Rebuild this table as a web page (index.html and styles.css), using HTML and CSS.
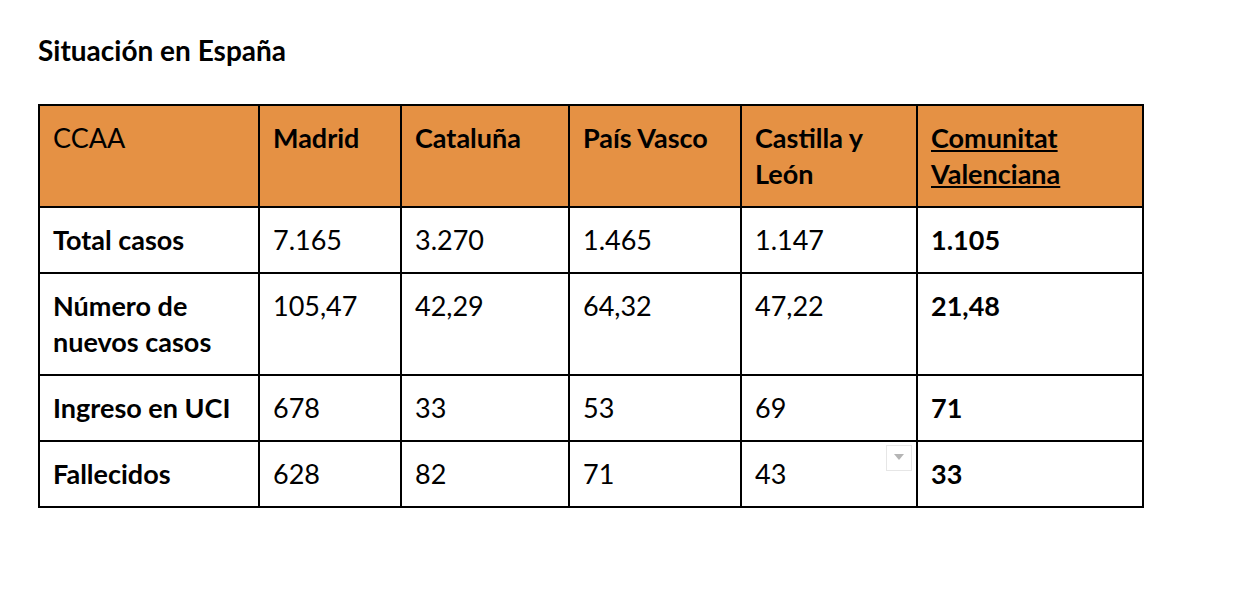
FILE: index.html
```html
<!DOCTYPE html>
<html lang="es">
<head>
<meta charset="utf-8">
<title>Situación en España</title>
<link rel="stylesheet" href="styles.css">
</head>
<body>
<main class="page">
  <h1 class="title">Situación en España</h1>
  <table class="data">
    <colgroup>
      <col class="c1"><col class="c2"><col class="c3"><col class="c4"><col class="c5"><col class="c6">
    </colgroup>
    <thead>
      <tr>
        <th class="plain">CCAA</th>
        <th>Madrid</th>
        <th>Cataluña</th>
        <th>País Vasco</th>
        <th>Castilla y León</th>
        <th><u>Comunitat Valenciana</u></th>
      </tr>
    </thead>
    <tbody>
      <tr>
        <th>Total casos</th>
        <td>7.165</td><td>3.270</td><td>1.465</td><td>1.147</td><td class="b">1.105</td>
      </tr>
      <tr>
        <th>Número de nuevos casos</th>
        <td>105,47</td><td>42,29</td><td>64,32</td><td>47,22</td><td class="b">21,48</td>
      </tr>
      <tr>
        <th>Ingreso en UCI</th>
        <td>678</td><td>33</td><td>53</td><td>69</td><td class="b">71</td>
      </tr>
      <tr>
        <th>Fallecidos</th>
        <td>628</td><td>82</td><td>71</td><td class="has-menu">43<span class="menu-btn" aria-hidden="true"></span></td><td class="b">33</td>
      </tr>
    </tbody>
  </table>
</main>
</body>
</html>
```
FILE: styles.css
```css
html, body {
  margin: 0;
  padding: 0;
  background: #ffffff;
}

body {
  font-family: Lato, "Open Sans", sans-serif;
  color: #000000;
}

.page {
  padding: 32px 0 0 38px;
}

.title {
  margin: 0 0 36px 0;
  font-size: 28px;
  line-height: 36px;
  font-weight: 700;
}

.data {
  border-collapse: collapse;
  table-layout: fixed;
  width: 1105px;
  font-size: 27px;
  line-height: 36px;
}

.c1 { width: 220px; }
.c2 { width: 142px; }
.c3 { width: 168px; }
.c4 { width: 172px; }
.c5 { width: 176px; }
.c6 { width: 226px; }

.data th,
.data td {
  border: 2px solid #000000;
  padding: 14px 13px 14px 13px;
  text-align: left;
  vertical-align: top;
}

.data th {
  font-weight: 700;
}

.data thead th {
  background: #e59144;
}

.data thead th.plain {
  font-weight: 400;
}

.data td {
  font-weight: 400;
}

.data td.b {
  font-weight: 700;
}

.has-menu {
  position: relative;
}

.menu-btn {
  position: absolute;
  top: 3px;
  right: 4px;
  width: 26px;
  height: 26px;
  border: 1px solid #e6e6e6;
  background: #ffffff;
  box-sizing: border-box;
}

.menu-btn::after {
  content: "";
  position: absolute;
  left: 7px;
  top: 8px;
  border-left: 5px solid transparent;
  border-right: 5px solid transparent;
  border-top: 6px solid #b5b5b5;
}
```
